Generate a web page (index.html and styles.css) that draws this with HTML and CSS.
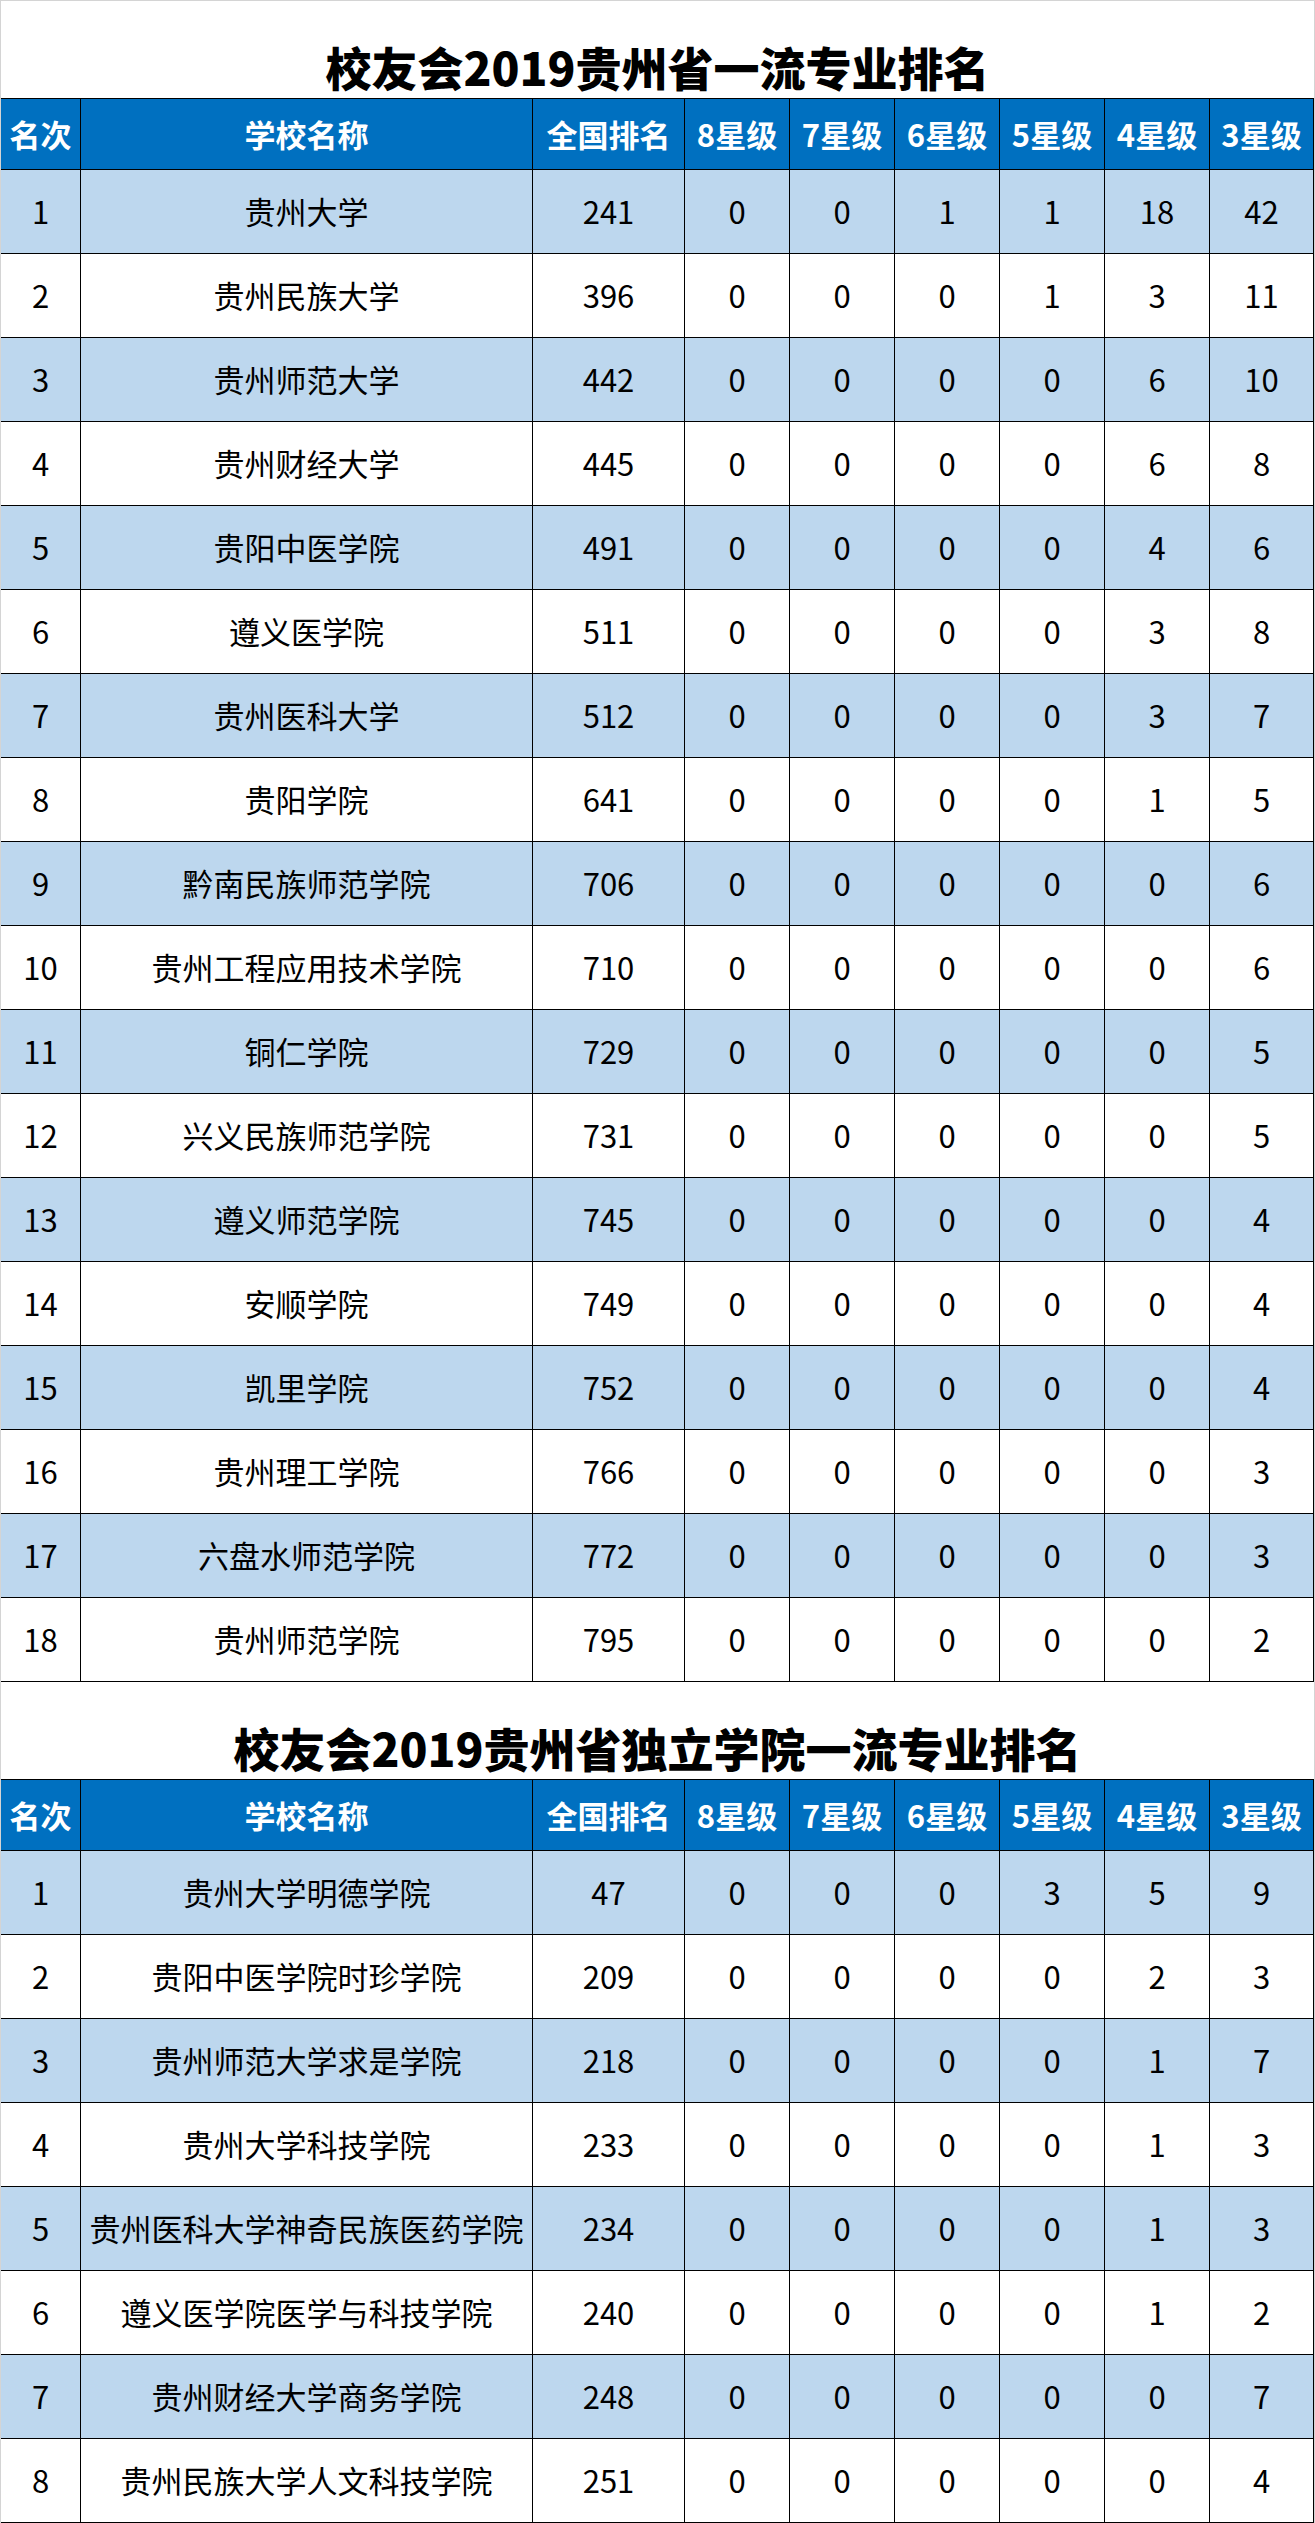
FILE: index.html
```html
<!DOCTYPE html>
<html lang="zh-CN">
<head>
<meta charset="utf-8">
<title>校友会2019贵州省一流专业排名</title>
<link rel="stylesheet" href="styles.css">
</head>
<body>
<div class="page">
  <div class="title"><span>校友会2019贵州省一流专业排名</span></div>
  <div class="table">
    <div class="cell head">名次</div><div class="cell head">学校名称</div><div class="cell head">全国排名</div><div class="cell head">8星级</div><div class="cell head">7星级</div><div class="cell head">6星级</div><div class="cell head">5星级</div><div class="cell head">4星级</div><div class="cell head">3星级</div>
    <div class="cell blue">1</div><div class="cell blue">贵州大学</div><div class="cell blue">241</div><div class="cell blue">0</div><div class="cell blue">0</div><div class="cell blue">1</div><div class="cell blue">1</div><div class="cell blue">18</div><div class="cell blue">42</div>
    <div class="cell">2</div><div class="cell">贵州民族大学</div><div class="cell">396</div><div class="cell">0</div><div class="cell">0</div><div class="cell">0</div><div class="cell">1</div><div class="cell">3</div><div class="cell">11</div>
    <div class="cell blue">3</div><div class="cell blue">贵州师范大学</div><div class="cell blue">442</div><div class="cell blue">0</div><div class="cell blue">0</div><div class="cell blue">0</div><div class="cell blue">0</div><div class="cell blue">6</div><div class="cell blue">10</div>
    <div class="cell">4</div><div class="cell">贵州财经大学</div><div class="cell">445</div><div class="cell">0</div><div class="cell">0</div><div class="cell">0</div><div class="cell">0</div><div class="cell">6</div><div class="cell">8</div>
    <div class="cell blue">5</div><div class="cell blue">贵阳中医学院</div><div class="cell blue">491</div><div class="cell blue">0</div><div class="cell blue">0</div><div class="cell blue">0</div><div class="cell blue">0</div><div class="cell blue">4</div><div class="cell blue">6</div>
    <div class="cell">6</div><div class="cell">遵义医学院</div><div class="cell">511</div><div class="cell">0</div><div class="cell">0</div><div class="cell">0</div><div class="cell">0</div><div class="cell">3</div><div class="cell">8</div>
    <div class="cell blue">7</div><div class="cell blue">贵州医科大学</div><div class="cell blue">512</div><div class="cell blue">0</div><div class="cell blue">0</div><div class="cell blue">0</div><div class="cell blue">0</div><div class="cell blue">3</div><div class="cell blue">7</div>
    <div class="cell">8</div><div class="cell">贵阳学院</div><div class="cell">641</div><div class="cell">0</div><div class="cell">0</div><div class="cell">0</div><div class="cell">0</div><div class="cell">1</div><div class="cell">5</div>
    <div class="cell blue">9</div><div class="cell blue">黔南民族师范学院</div><div class="cell blue">706</div><div class="cell blue">0</div><div class="cell blue">0</div><div class="cell blue">0</div><div class="cell blue">0</div><div class="cell blue">0</div><div class="cell blue">6</div>
    <div class="cell">10</div><div class="cell">贵州工程应用技术学院</div><div class="cell">710</div><div class="cell">0</div><div class="cell">0</div><div class="cell">0</div><div class="cell">0</div><div class="cell">0</div><div class="cell">6</div>
    <div class="cell blue">11</div><div class="cell blue">铜仁学院</div><div class="cell blue">729</div><div class="cell blue">0</div><div class="cell blue">0</div><div class="cell blue">0</div><div class="cell blue">0</div><div class="cell blue">0</div><div class="cell blue">5</div>
    <div class="cell">12</div><div class="cell">兴义民族师范学院</div><div class="cell">731</div><div class="cell">0</div><div class="cell">0</div><div class="cell">0</div><div class="cell">0</div><div class="cell">0</div><div class="cell">5</div>
    <div class="cell blue">13</div><div class="cell blue">遵义师范学院</div><div class="cell blue">745</div><div class="cell blue">0</div><div class="cell blue">0</div><div class="cell blue">0</div><div class="cell blue">0</div><div class="cell blue">0</div><div class="cell blue">4</div>
    <div class="cell">14</div><div class="cell">安顺学院</div><div class="cell">749</div><div class="cell">0</div><div class="cell">0</div><div class="cell">0</div><div class="cell">0</div><div class="cell">0</div><div class="cell">4</div>
    <div class="cell blue">15</div><div class="cell blue">凯里学院</div><div class="cell blue">752</div><div class="cell blue">0</div><div class="cell blue">0</div><div class="cell blue">0</div><div class="cell blue">0</div><div class="cell blue">0</div><div class="cell blue">4</div>
    <div class="cell">16</div><div class="cell">贵州理工学院</div><div class="cell">766</div><div class="cell">0</div><div class="cell">0</div><div class="cell">0</div><div class="cell">0</div><div class="cell">0</div><div class="cell">3</div>
    <div class="cell blue">17</div><div class="cell blue">六盘水师范学院</div><div class="cell blue">772</div><div class="cell blue">0</div><div class="cell blue">0</div><div class="cell blue">0</div><div class="cell blue">0</div><div class="cell blue">0</div><div class="cell blue">3</div>
    <div class="cell">18</div><div class="cell">贵州师范学院</div><div class="cell">795</div><div class="cell">0</div><div class="cell">0</div><div class="cell">0</div><div class="cell">0</div><div class="cell">0</div><div class="cell">2</div>
  </div>
  <div class="title"><span>校友会2019贵州省独立学院一流专业排名</span></div>
  <div class="table">
    <div class="cell head">名次</div><div class="cell head">学校名称</div><div class="cell head">全国排名</div><div class="cell head">8星级</div><div class="cell head">7星级</div><div class="cell head">6星级</div><div class="cell head">5星级</div><div class="cell head">4星级</div><div class="cell head">3星级</div>
    <div class="cell blue">1</div><div class="cell blue">贵州大学明德学院</div><div class="cell blue">47</div><div class="cell blue">0</div><div class="cell blue">0</div><div class="cell blue">0</div><div class="cell blue">3</div><div class="cell blue">5</div><div class="cell blue">9</div>
    <div class="cell">2</div><div class="cell">贵阳中医学院时珍学院</div><div class="cell">209</div><div class="cell">0</div><div class="cell">0</div><div class="cell">0</div><div class="cell">0</div><div class="cell">2</div><div class="cell">3</div>
    <div class="cell blue">3</div><div class="cell blue">贵州师范大学求是学院</div><div class="cell blue">218</div><div class="cell blue">0</div><div class="cell blue">0</div><div class="cell blue">0</div><div class="cell blue">0</div><div class="cell blue">1</div><div class="cell blue">7</div>
    <div class="cell">4</div><div class="cell">贵州大学科技学院</div><div class="cell">233</div><div class="cell">0</div><div class="cell">0</div><div class="cell">0</div><div class="cell">0</div><div class="cell">1</div><div class="cell">3</div>
    <div class="cell blue">5</div><div class="cell blue">贵州医科大学神奇民族医药学院</div><div class="cell blue">234</div><div class="cell blue">0</div><div class="cell blue">0</div><div class="cell blue">0</div><div class="cell blue">0</div><div class="cell blue">1</div><div class="cell blue">3</div>
    <div class="cell">6</div><div class="cell">遵义医学院医学与科技学院</div><div class="cell">240</div><div class="cell">0</div><div class="cell">0</div><div class="cell">0</div><div class="cell">0</div><div class="cell">1</div><div class="cell">2</div>
    <div class="cell blue">7</div><div class="cell blue">贵州财经大学商务学院</div><div class="cell blue">248</div><div class="cell blue">0</div><div class="cell blue">0</div><div class="cell blue">0</div><div class="cell blue">0</div><div class="cell blue">0</div><div class="cell blue">7</div>
    <div class="cell">8</div><div class="cell">贵州民族大学人文科技学院</div><div class="cell">251</div><div class="cell">0</div><div class="cell">0</div><div class="cell">0</div><div class="cell">0</div><div class="cell">0</div><div class="cell">4</div>
  </div>
</div>
</body>
</html>
```
FILE: styles.css
```css
html, body {
  margin: 0;
  padding: 0;
  background: #ffffff;
}
body {
  font-family: "Noto Sans CJK SC", "Noto Sans", sans-serif;
  color: #000000;
}
.page {
  width: 1315px;
  box-sizing: border-box;
  border-top: 1px solid #d4d4d4;
  border-left: 1px solid #d4d4d4;
  border-right: 1px solid #d4d4d4;
  background: #ffffff;
}
.title {
  height: 97px;
  box-sizing: border-box;
  display: flex;
  justify-content: center;
  align-items: flex-end;
  padding-bottom: 9px;
  font-size: 46px;
  font-weight: 900;
  line-height: 46px;
}
.table {
  display: grid;
  grid-template-columns: 80px 452px 152px 105px 105px 105px 105px 105px 104px;
  grid-template-rows: 72px;
  grid-auto-rows: 84px;
}
.cell {
  box-sizing: border-box;
  border-right: 1px solid #000000;
  border-bottom: 1px solid #000000;
  display: flex;
  align-items: center;
  justify-content: center;
  padding-bottom: 2px;
  font-size: 31px;
  line-height: 31px;
  white-space: nowrap;
  background: #ffffff;
}
.cell.blue {
  background: #bdd7ee;
}
.cell.head {
  border-top: 1px solid #000000;
  background: #0070c0;
  color: #ffffff;
  font-weight: 700;
}
```
